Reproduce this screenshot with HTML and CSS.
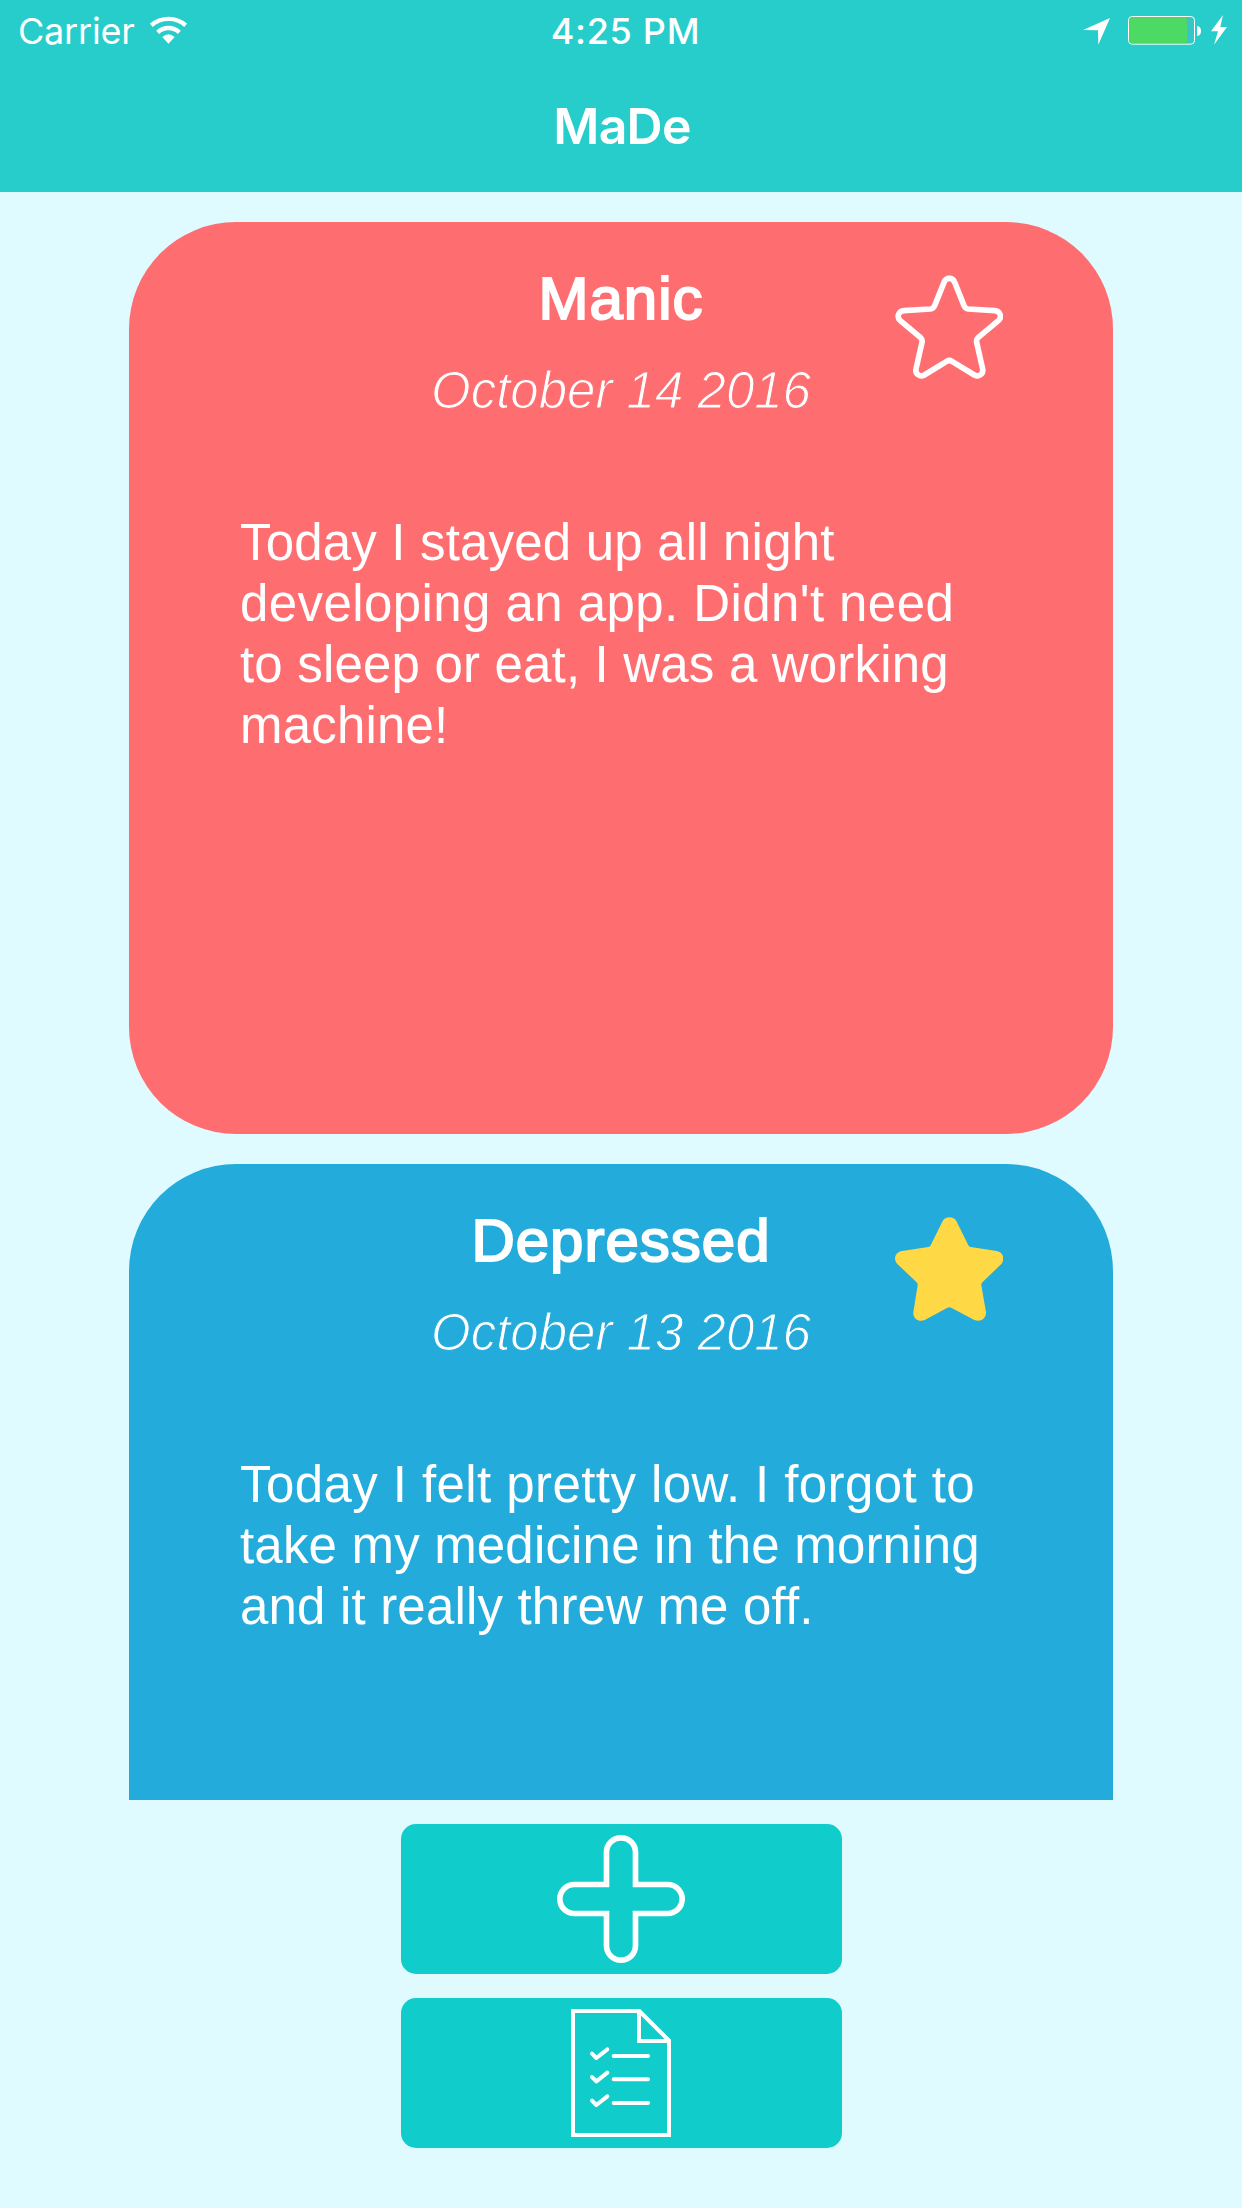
FILE: index.html
```html
<!DOCTYPE html>
<html lang="en">
<head>
<meta charset="utf-8">
<title>MaDe</title>
<link rel="stylesheet" href="styles.css">
</head>
<body>
<div class="app">
  <header class="topbar">
    <div class="status">
      <div class="status-left">
        <span class="carrier">Carrier</span>
        <svg class="wifi" viewBox="450 47 111 84" fill="none" stroke="#fff" stroke-width="13">
          <path d="M454 75A78 78 0 0 1 557 75"/>
          <path d="M473 96A47 47 0 0 1 538 96"/>
          <path d="M487 110Q505.500 93 524 110L505.500 130Z" fill="#fff" stroke="none"/>
        </svg>
      </div>
      <span class="clock">4:25 PM</span>
      <div class="status-right">
        <svg class="power" viewBox="69 45 432 90">
          <path d="M69 90L150 54L115 134L114 91Z" fill="#fff"/>
          <rect x="205.500" y="49.500" width="198" height="83" rx="11" fill="#38c5c8" stroke="#fff" stroke-width="3"/>
          <path d="M381 52V130H216Q208 130 208 122V60Q208 52 216 52Z" fill="#4cd964"/>
          <path d="M411 78Q423 80 423 93Q423 106 411 108Z" fill="#fff"/>
          <path d="M489 45L453 94H474L462 134L501 81H481Z" fill="#fff"/>
        </svg>
      </div>
    </div>
    <h1 class="app-title">MaDe</h1>
  </header>

  <main class="feed">
    <article class="card manic">
      <div class="card-head">
        <h2 class="mood">Manic</h2>
        <p class="date">October 14 2016</p>
      </div>
      <svg class="star" viewBox="105 225 324 312" fill="none" stroke="#fff" stroke-width="17" stroke-linejoin="round">
        <path d="M252 247C258 231 278 231 284 247L312 317Q316 326 325 327L404 332C420 333 427 350 416 361L355 412Q348 418 350 427L368 507C371 522 356 532 343 525L276 484Q268 479 260 484L193 525C180 532 165 522 168 507L186 427Q188 418 181 412L120 361C109 350 116 333 132 332L211 327Q220 326 224 317Z"/>
      </svg>
      <p class="entry">
        <span class="line">Today I stayed up all night</span>
        <span class="line wide">developing an app. Didn't need</span>
        <span class="line">to sleep or eat, I was a working</span>
        <span class="line">machine!</span>
      </p>
    </article>
    <article class="card depressed">
      <div class="card-head">
        <h2 class="mood">Depressed</h2>
        <p class="date">October 13 2016</p>
      </div>
      <svg class="star" viewBox="105 261 324 312" fill="#ffd945">
        <path d="M248 273C256 258 281 258 289 273L325 346Q327 351 332 351L410 363C429 366 436 386 424 402L368 456Q363 460 364 466L378 547C379 565 361 578 343 570L275 534Q268 529 261 534L194 570C176 578 158 565 160 547L173 466Q174 460 169 456L112 402C98 386 107 366 126 363L205 351Q210 351 212 346Z"/>
      </svg>
      <p class="entry">
        <span class="line wide">Today I felt pretty low. I forgot to</span>
        <span class="line">take my medicine in the morning</span>
        <span class="line">and it really threw me off.</span>
      </p>
    </article>
  </main>

  <nav class="actions">
    <button class="action" aria-label="Add entry">
      <svg class="plus" viewBox="501 165 384 384" fill="none" stroke="#fff" stroke-width="17">
        <path d="M649.500 313.500V217A43.500 43.500 0 0 1 736.500 217V313.500H833A43.500 43.500 0 0 1 833 400.500H736.500V497A43.500 43.500 0 0 1 649.500 497V400.500H553A43.500 43.500 0 0 1 553 313.500Z"/>
      </svg>
    </button>
    <button class="action" aria-label="Checklist">
      <svg class="sheet" viewBox="543 687 300 384" fill="none" stroke="#fff" stroke-width="12">
        <path d="M549 693H748L837 782V1065H549Z"/>
        <path d="M747 695V783H837"/>
        <g stroke-linecap="round" stroke-linejoin="round">
          <path d="M606 821L619 834L652 808M671 828H774"/>
          <path d="M606 891L619 904L652 878M671 898H774"/>
          <path d="M606 962L619 975L652 949M671 969H774"/>
        </g>
      </svg>
    </button>
  </nav>
</div>
</body>
</html>
```
FILE: styles.css
```css
* { box-sizing: border-box; }
body, h1, h2, p { margin: 0; }

body {
  background: #e0fbff;
  color: #fff;
  font-family: "Liberation Sans", Arial, sans-serif;
}
svg { display: block; }

.app {
  width: 1242px;
  height: 2208px;
  overflow: hidden;
  display: flex;
  flex-direction: column;
}

.topbar {
  height: 192px;
  background: #27cdcb;
  font-family: Inter, sans-serif;
}
.status {
  height: 60px;
  padding: 0 15px 0 18px;
  display: grid;
  grid-template-columns: 1fr auto 1fr;
}
.status-left, .status-right { display: flex; align-items: flex-start; }
.status-right { justify-content: flex-end; }
.carrier, .clock { font-size: 36px; line-height: 62px; white-space: nowrap; }
.carrier { width: 132px; letter-spacing: -0.2px; }
.clock { padding-left: 6px; font-weight: 500; letter-spacing: 0.7px; }
.wifi { width: 37px; height: 28px; margin-top: 16px; }
.power { width: 144px; height: 30px; margin-top: 15px; }
.app-title {
  padding-left: 2px;
  font-size: 50px;
  font-weight: 600;
  line-height: 132px;
  letter-spacing: -0.8px;
  text-align: center;
}

.feed {
  height: 1608px;
  padding: 30px 129px 0;
  overflow: hidden;
  display: flex;
  flex-direction: column;
  gap: 30px;
}
.card {
  flex: none;
  height: 912px;
  border-radius: 107px;
  display: grid;
  grid-template: 290px 1fr / 1fr;
}
.manic { --tone: #fe6e71; background: var(--tone); }
.depressed { --tone: #23abdb; background: var(--tone); }
.card-head { grid-area: 1 / 1; text-align: center; padding-top: 42px; }
.mood {
  font-size: 60px;
  font-weight: 400;
  line-height: 70px;
  letter-spacing: 1px;
  -webkit-text-stroke: 2px #fff;
}
.date {
  margin-top: 27px;
  font-size: 51px;
  font-style: italic;
  line-height: 60px;
  -webkit-text-stroke: 1.1px var(--tone);
}
.star {
  grid-area: 1 / 1;
  justify-self: end;
  width: 108px;
  height: 104px;
  margin: 53px 110px 0 0;
}
.entry {
  padding-left: 111px;
  font-size: 51px;
  line-height: 61px;
  white-space: nowrap;
}
.line { display: block; letter-spacing: 0.18px; }
.wide { letter-spacing: 0.42px; }

.actions {
  padding-top: 24px;
  display: flex;
  flex-direction: column;
  align-items: center;
  gap: 24px;
}
.action {
  width: 441px;
  height: 150px;
  margin-left: 1px;
  padding: 0 1px 0 0;
  border: 0;
  border-radius: 15px;
  background: #10cdcb;
  display: flex;
  align-items: center;
  justify-content: center;
}
.plus { width: 128px; height: 128px; }
.sheet { width: 100px; height: 128px; }
```
